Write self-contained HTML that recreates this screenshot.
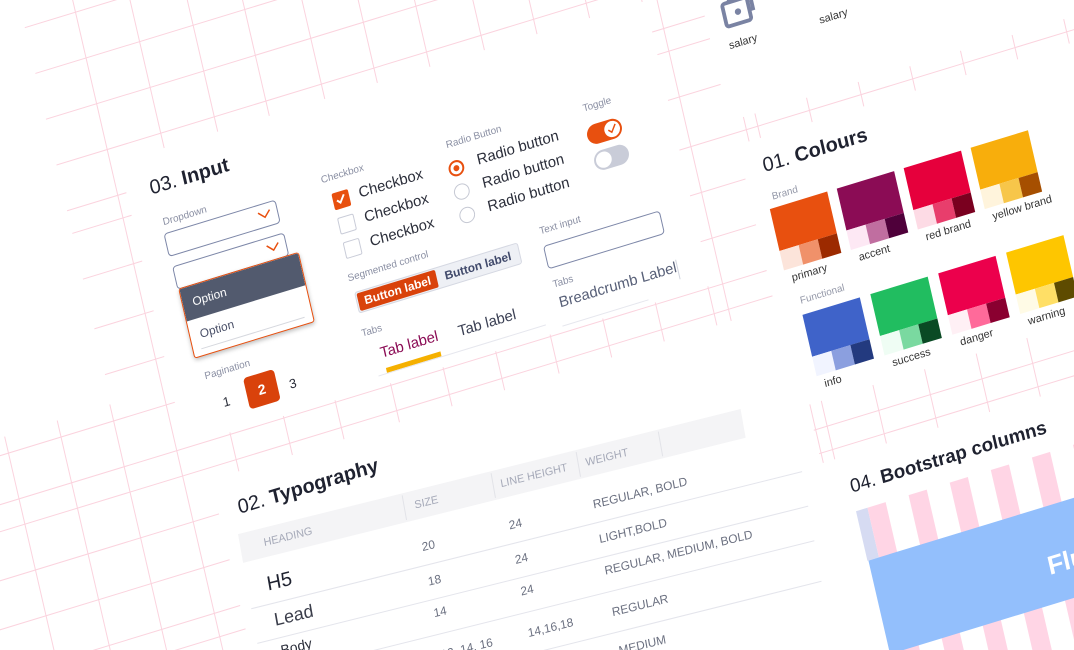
<!DOCTYPE html>
<html><head><meta charset="utf-8">
<style>
html,body{margin:0;padding:0;width:1074px;height:650px;overflow:hidden;background:#fff;font-family:"Liberation Sans",Arial,sans-serif;}
#clip{position:absolute;left:0;top:0;width:1074px;height:650px;overflow:hidden;}
#w{position:absolute;left:0;top:0;width:1600px;height:1200px;transform-origin:0 0;transform:matrix(.956,-.292,.225,.974,0,0);}
#w div,#w span.a{position:absolute;white-space:nowrap;}
.lb{font-size:10px;color:#8a8fa3;line-height:12px;}
.t20{font-size:20px;color:#1f2230;line-height:24px;}
.box{border:1px solid #7d87a8;border-radius:4px;box-sizing:border-box;}
.cb{width:17px;height:17px;box-sizing:border-box;border:1.5px solid #c9ccd8;border-radius:2px;}
.ct{font-size:15px;color:#2b2e3a;line-height:18px;}
.rd{width:16px;height:16px;box-sizing:border-box;border:1.5px solid #c5c8d3;border-radius:50%;}
.hd{font-size:11px;color:#a5a9b8;line-height:14px;}
.v{font-size:12px;color:#6b7080;line-height:14px;}
.ln{height:1px;background:#e4e5ec;}
.sw{width:60px;height:63px;}
.sl{font-size:11px;color:#333;line-height:13px;}
</style></head><body>
<div id="clip">
<div id="w">
<svg style="position:absolute;left:-300px;top:-100px" width="1800" height="1300" viewBox="-300 -100 1800 1300">
<g stroke="#fbd3de" stroke-width="1">
<line x1="-300" y1="33.8" x2="1500" y2="33.8"/><line x1="-300" y1="80.8" x2="1500" y2="80.8"/><line x1="-300" y1="127.8" x2="1500" y2="127.8"/><line x1="-300" y1="174.8" x2="1500" y2="174.8"/><line x1="-300" y1="221.8" x2="1500" y2="221.8"/><line x1="-300" y1="245" x2="1500" y2="245"/><line x1="-300" y1="292" x2="1500" y2="292"/><line x1="-300" y1="343" x2="1500" y2="343"/><line x1="-300" y1="390" x2="1500" y2="390"/><line x1="-300" y1="437" x2="1500" y2="437"/><line x1="-300" y1="484" x2="1500" y2="484"/><line x1="-300" y1="510" x2="1500" y2="510"/><line x1="-300" y1="557" x2="1500" y2="557"/><line x1="-300" y1="604" x2="1500" y2="604"/><line x1="-300" y1="651" x2="1500" y2="651"/><line x1="-300" y1="675" x2="1500" y2="675"/><line x1="-300" y1="722" x2="1500" y2="722"/><line x1="-300" y1="769" x2="1500" y2="769"/><line x1="-300" y1="816" x2="1500" y2="816"/><line x1="-300" y1="863" x2="1500" y2="863"/><line x1="-300" y1="910" x2="1500" y2="910"/><line x1="-300" y1="957" x2="1500" y2="957"/>
<line x1="-94" y1="-100" x2="-94" y2="1200"/><line x1="-39" y1="-100" x2="-39" y2="1200"/><line x1="16" y1="-100" x2="16" y2="1200"/><line x1="71" y1="-100" x2="71" y2="1200"/><line x1="127" y1="-100" x2="127" y2="1200"/><line x1="183" y1="-100" x2="183" y2="1200"/><line x1="237" y1="-100" x2="237" y2="1200"/><line x1="295" y1="-100" x2="295" y2="1200"/><line x1="350" y1="-100" x2="350" y2="1200"/><line x1="405" y1="-100" x2="405" y2="1200"/><line x1="462" y1="-100" x2="462" y2="1200"/><line x1="517" y1="-100" x2="517" y2="1200"/><line x1="572" y1="-100" x2="572" y2="1200"/><line x1="627" y1="-100" x2="627" y2="1200"/><line x1="642" y1="-100" x2="642" y2="1200"/><line x1="700" y1="-100" x2="700" y2="1200"/><line x1="712" y1="-100" x2="712" y2="1200"/><line x1="766" y1="-100" x2="766" y2="1200"/><line x1="820" y1="-100" x2="820" y2="1200"/><line x1="874" y1="-100" x2="874" y2="1200"/><line x1="927" y1="-100" x2="927" y2="1200"/><line x1="981" y1="-100" x2="981" y2="1200"/><line x1="1035" y1="-100" x2="1035" y2="1200"/><line x1="1089" y1="-100" x2="1089" y2="1200"/><line x1="1143" y1="-100" x2="1143" y2="1200"/>
</g>
<rect x="-300" y="-100" width="318" height="520" fill="#fff"/>
<rect x="80" y="190" width="550" height="292" fill="#fff"/>
<rect x="98" y="522" width="600" height="600" fill="#fff"/>
<rect x="688" y="355" width="800" height="270" fill="#fff"/>
<rect x="685" y="-100" width="800" height="430" fill="#fff"/>
<rect x="696" y="685" width="800" height="500" fill="#fff"/>
</svg>

<!-- INPUT -->
<div class="t20" style="left:104px;top:213px">03. <b>Input</b></div>
<div class="lb" style="left:109px;top:256px">Dropdown</div>
<div class="box" style="left:107px;top:272px;width:117px;height:24px"><svg style="position:absolute;right:6px;top:6px" width="14" height="9"><polyline points="1,1 7,7 13,1" fill="none" stroke="#e8500f" stroke-width="1.5"/></svg></div>
<div class="box" style="left:108px;top:306px;width:117px;height:24px"><svg style="position:absolute;right:6px;top:6px" width="14" height="9"><polyline points="1,1 7,7 13,1" fill="none" stroke="#e8500f" stroke-width="1.5"/></svg></div>
<div style="left:109px;top:329px;width:124px;height:70px;border:1px solid #e8500f;border-radius:3px;background:#fff;box-shadow:0 2px 4px rgba(0,0,0,.25);overflow:hidden">
 <div style="left:0;top:0;width:124px;height:33px;background:#525a6e;color:#fff;font-size:12px;line-height:33px;padding-left:10px;box-sizing:border-box">Option</div>
 <div style="left:0;top:33px;width:124px;height:33px;color:#4a5068;font-size:12px;line-height:33px;padding-left:10px;box-sizing:border-box">Option</div>
 <div style="left:8px;top:63px;width:108px;height:1px;background:#d6d8de"></div>
</div>
<div class="lb" style="left:115px;top:416px">Pagination</div>
<div style="left:127px;top:444px;font-size:13px;color:#2b2e3a">1</div>
<div style="left:152px;top:434px;width:32px;height:32px;background:#d9420b;border-radius:4px;color:#fff;font-weight:bold;font-size:14px;line-height:32px;text-align:center">2</div>
<div style="left:196px;top:446px;font-size:13px;color:#2b2e3a">3</div>

<div class="lb" style="left:273px;top:262px">Checkbox</div>
<div class="cb" style="left:280px;top:283px;background:#e8500f;border-color:#e8500f"><svg width="14" height="14" style="position:absolute;left:0;top:0"><polyline points="3,7 6,10 11,3" fill="none" stroke="#fff" stroke-width="2"/></svg></div>
<div class="cb" style="left:280px;top:308px"></div>
<div class="cb" style="left:280px;top:333px"></div>
<div class="ct" style="left:307px;top:282px">Checkbox</div>
<div class="ct" style="left:307px;top:307px">Checkbox</div>
<div class="ct" style="left:307px;top:332px">Checkbox</div>

<div class="lb" style="left:403px;top:265px">Radio Button</div>
<div class="rd" style="left:400px;top:287px;border:2px solid #e8500f"><div style="left:3px;top:3px;width:6px;height:6px;border-radius:50%;background:#e8500f"></div></div>
<div class="rd" style="left:400px;top:311px"></div>
<div class="rd" style="left:400px;top:335px"></div>
<div class="ct" style="left:430px;top:285px">Radio button</div>
<div class="ct" style="left:430px;top:309px">Radio button</div>
<div class="ct" style="left:430px;top:333px">Radio button</div>

<div class="lb" style="left:545px;top:270px">Toggle</div>
<div style="left:543px;top:293px;width:36px;height:20px;border-radius:10px;background:#e8500f"><div style="left:18px;top:2px;width:16px;height:16px;border-radius:50%;background:#fff"><svg width="16" height="16" style="position:absolute;left:0;top:0"><polyline points="4,8 7,11 12,4" fill="none" stroke="#e8500f" stroke-width="1.5"/></svg></div></div>
<div style="left:544px;top:320px;width:36px;height:20px;border-radius:10px;background:#c9ccd8"><div style="left:2px;top:2px;width:16px;height:16px;border-radius:50%;background:#fff"></div></div>

<div class="lb" style="left:277px;top:364px">Segmented control</div>
<div style="left:280px;top:384px;width:171px;height:22px;border:1px solid #d5d8e2;background:#eef0f5;border-radius:3px;box-sizing:border-box">
 <div style="left:1px;top:1px;width:82px;height:18px;background:#d9420b;border-radius:2px;color:#fff;font-size:12px;line-height:18px;text-align:center;font-weight:bold">Button label</div>
 <div style="left:84px;top:1px;width:84px;height:18px;color:#414a6b;font-size:12px;line-height:18px;text-align:center;font-weight:bold">Button label</div>
</div>
<div class="lb" style="left:278px;top:421px">Tabs</div>
<div style="left:292px;top:442px;font-size:15px;color:#8b0c55;line-height:18px">Tab label</div>
<div style="left:294px;top:466px;width:57px;height:5px;background:#f5b000"></div>
<div style="left:373px;top:444px;font-size:15px;color:#3b4054;line-height:18px">Tab label</div>
<div class="ln" style="left:285px;top:471px;width:175px;background:#e6e7ee"></div>

<div class="lb" style="left:475px;top:375px">Text input</div>
<div class="box" style="left:475px;top:395px;width:122px;height:24px"></div>
<div class="lb" style="left:476px;top:430px">Tabs</div>
<div style="left:478px;top:446px;font-size:15px;color:#586078;line-height:18px">Breadcrumb Label</div>
<div style="left:601px;top:447px;width:1px;height:20px;background:#d0d3dd"></div>
<div class="ln" style="left:476px;top:477px;width:90px;background:#e6e7ee"></div>

<!-- TYPOGRAPHY -->
<div class="t20" style="left:118px;top:545px">02. <b>Typography</b></div>
<div style="left:0;top:0;width:1000px;height:1000px;transform-origin:112px 582px;transform:rotate(3deg)">
<div style="left:112px;top:582px;width:520px;height:29px;background:#f4f4f6"></div>
<div style="left:281px;top:584px;width:1px;height:25px;background:#e2e3e8"></div>
<div style="left:373px;top:584px;width:1px;height:25px;background:#e2e3e8"></div>
<div style="left:461px;top:584px;width:1px;height:25px;background:#e2e3e8"></div>
<div style="left:546px;top:584px;width:1px;height:25px;background:#e2e3e8"></div>
<div class="hd" style="left:136px;top:590px">HEADING</div>
<div class="hd" style="left:292px;top:590px">SIZE</div>
<div class="hd" style="left:381px;top:590px">LINE HEIGHT</div>
<div class="hd" style="left:469px;top:590px">WEIGHT</div>
<div class="ln" style="left:112px;top:657px;width:570px"></div>
<div class="ln" style="left:112px;top:692px;width:570px"></div>
<div class="ln" style="left:112px;top:727px;width:570px"></div>
<div class="ln" style="left:112px;top:768px;width:570px"></div>
<div style="left:132px;top:626px;font-size:20px;color:#1f2230;line-height:24px">H5</div>
<div style="left:133px;top:663px;font-size:18px;color:#3a3d4a;line-height:22px;font-weight:300">Lead</div>
<div style="left:134px;top:697px;font-size:14px;color:#2b2e3a;line-height:17px">Body</div>
<div class="v" style="left:292px;top:632px">20</div><div class="v" style="left:382px;top:632px">24</div><div class="v" style="left:469px;top:632px">REGULAR, BOLD</div>
<div class="v" style="left:292px;top:667px">18</div><div class="v" style="left:382px;top:667px">24</div><div class="v" style="left:469px;top:667px">LIGHT,BOLD</div>
<div class="v" style="left:292px;top:699px">14</div><div class="v" style="left:382px;top:699px">24</div><div class="v" style="left:469px;top:699px">REGULAR, MEDIUM, BOLD</div>
<div class="v" style="left:292px;top:741px">12, 14, 16</div><div class="v" style="left:382px;top:741px">14,16,18</div><div class="v" style="left:469px;top:741px">REGULAR</div>
<div class="v" style="left:425px;top:780px">28</div><div class="v" style="left:469px;top:780px">MEDIUM</div>
</div>

<!-- ICONS -->
<svg style="position:absolute;left:700px;top:208px" width="42" height="36" viewBox="0 0 32 28"><rect x="3" y="6" width="20" height="18" rx="2" fill="none" stroke="#7a83a3" stroke-width="3"/><path d="M9 6 V2 H26 V16 H23" fill="none" stroke="#7a83a3" stroke-width="3"/><circle cx="14" cy="15" r="2.5" fill="#7a83a3"/></svg>
<div class="sl" style="left:702px;top:252px;color:#333">salary</div>
<svg style="position:absolute;left:794px;top:210px" width="40" height="34" viewBox="0 0 32 28"><path d="M3 2 V22 H26" fill="none" stroke="#7a83a3" stroke-width="3"/></svg>
<div class="sl" style="left:796px;top:254px">salary</div>
<div class="sl" style="left:884px;top:254px">salary</div>

<!-- COLOURS -->
<div class="t20" style="left:708px;top:371px">01. <b>Colours</b></div>
<div class="lb" style="left:710px;top:410px;color:#9498a8">Brand</div>
<div class="sw" style="left:705px;top:426px"><div style="left:0;top:0;width:60px;height:43px;background:#e8500f"></div><div style="left:0;top:43px;width:20px;height:20px;background:#fce4da"></div><div style="left:20px;top:43px;width:20px;height:20px;background:#f0916a"></div><div style="left:40px;top:43px;width:20px;height:20px;background:#9c2a00"></div></div>
<div class="sw" style="left:775px;top:426px"><div style="left:0;top:0;width:60px;height:43px;background:#8b0c55"></div><div style="left:0;top:43px;width:20px;height:20px;background:#fde8f4"></div><div style="left:20px;top:43px;width:20px;height:20px;background:#c06ea0"></div><div style="left:40px;top:43px;width:20px;height:20px;background:#4f003a"></div></div>
<div class="sw" style="left:845px;top:426px"><div style="left:0;top:0;width:60px;height:43px;background:#e6003c"></div><div style="left:0;top:43px;width:20px;height:20px;background:#fddbe5"></div><div style="left:20px;top:43px;width:20px;height:20px;background:#e83e6c"></div><div style="left:40px;top:43px;width:20px;height:20px;background:#7a001f"></div></div>
<div class="sw" style="left:915px;top:426px"><div style="left:0;top:0;width:60px;height:43px;background:#f8ae0c"></div><div style="left:0;top:43px;width:20px;height:20px;background:#fff4dc"></div><div style="left:20px;top:43px;width:20px;height:20px;background:#f7c64a"></div><div style="left:40px;top:43px;width:20px;height:20px;background:#a64f00"></div></div>
<div class="sl" style="left:711px;top:493px">primary</div>
<div class="sl" style="left:781px;top:493px">accent</div>
<div class="sl" style="left:851px;top:493px">red brand</div>
<div class="sl" style="left:921px;top:493px">yellow brand</div>
<div class="lb" style="left:714px;top:518px;color:#9498a8">Functional</div>
<div class="sw" style="left:713px;top:537px"><div style="left:0;top:0;width:60px;height:43px;background:#3f63c9"></div><div style="left:0;top:43px;width:20px;height:20px;background:#f1f4ff"></div><div style="left:20px;top:43px;width:20px;height:20px;background:#8b9fdf"></div><div style="left:40px;top:43px;width:20px;height:20px;background:#233a7f"></div></div>
<div class="sw" style="left:784px;top:537px"><div style="left:0;top:0;width:60px;height:43px;background:#21bd60"></div><div style="left:0;top:43px;width:20px;height:20px;background:#effdf4"></div><div style="left:20px;top:43px;width:20px;height:20px;background:#7ad9a0"></div><div style="left:40px;top:43px;width:20px;height:20px;background:#0a4a24"></div></div>
<div class="sw" style="left:855px;top:537px"><div style="left:0;top:0;width:60px;height:43px;background:#ec004c"></div><div style="left:0;top:43px;width:20px;height:20px;background:#fff0f5"></div><div style="left:20px;top:43px;width:20px;height:20px;background:#ff6a9a"></div><div style="left:40px;top:43px;width:20px;height:20px;background:#8a0030"></div></div>
<div class="sw" style="left:926px;top:537px"><div style="left:0;top:0;width:60px;height:43px;background:#fec600"></div><div style="left:0;top:43px;width:20px;height:20px;background:#fffbe6"></div><div style="left:20px;top:43px;width:20px;height:20px;background:#ffdf66"></div><div style="left:40px;top:43px;width:20px;height:20px;background:#5e4b00"></div></div>
<div class="sl" style="left:719px;top:604px">info</div>
<div class="sl" style="left:790px;top:604px">success</div>
<div class="sl" style="left:861px;top:604px">danger</div>
<div class="sl" style="left:932px;top:604px">warning</div>

<!-- BOOTSTRAP -->
<div class="t20" style="left:721px;top:705px;font-size:19px">04. <b>Bootstrap columns</b></div>
<div style="left:721px;top:741px;width:12px;height:51px;background:#d6dbf2"></div>
<div style="left:733px;top:741px;width:19px;height:300px;background:#ffd5e5"></div>
<div style="left:776px;top:741px;width:19px;height:300px;background:#ffd5e5"></div>
<div style="left:819px;top:741px;width:19px;height:300px;background:#ffd5e5"></div>
<div style="left:862px;top:741px;width:19px;height:300px;background:#ffd5e5"></div>
<div style="left:905px;top:741px;width:19px;height:300px;background:#ffd5e5"></div>
<div style="left:948px;top:741px;width:19px;height:300px;background:#ffd5e5"></div>
<div style="left:991px;top:741px;width:19px;height:300px;background:#ffd5e5"></div>
<div style="left:1034px;top:741px;width:19px;height:300px;background:#ffd5e5"></div>
<div style="left:722px;top:792px;width:700px;height:96px;background:#93bffc"></div>
<div style="left:896px;top:834px;font-size:26px;line-height:32px;color:#fff;font-weight:bold">Fluid</div>
</div>
</div>
</body></html>
